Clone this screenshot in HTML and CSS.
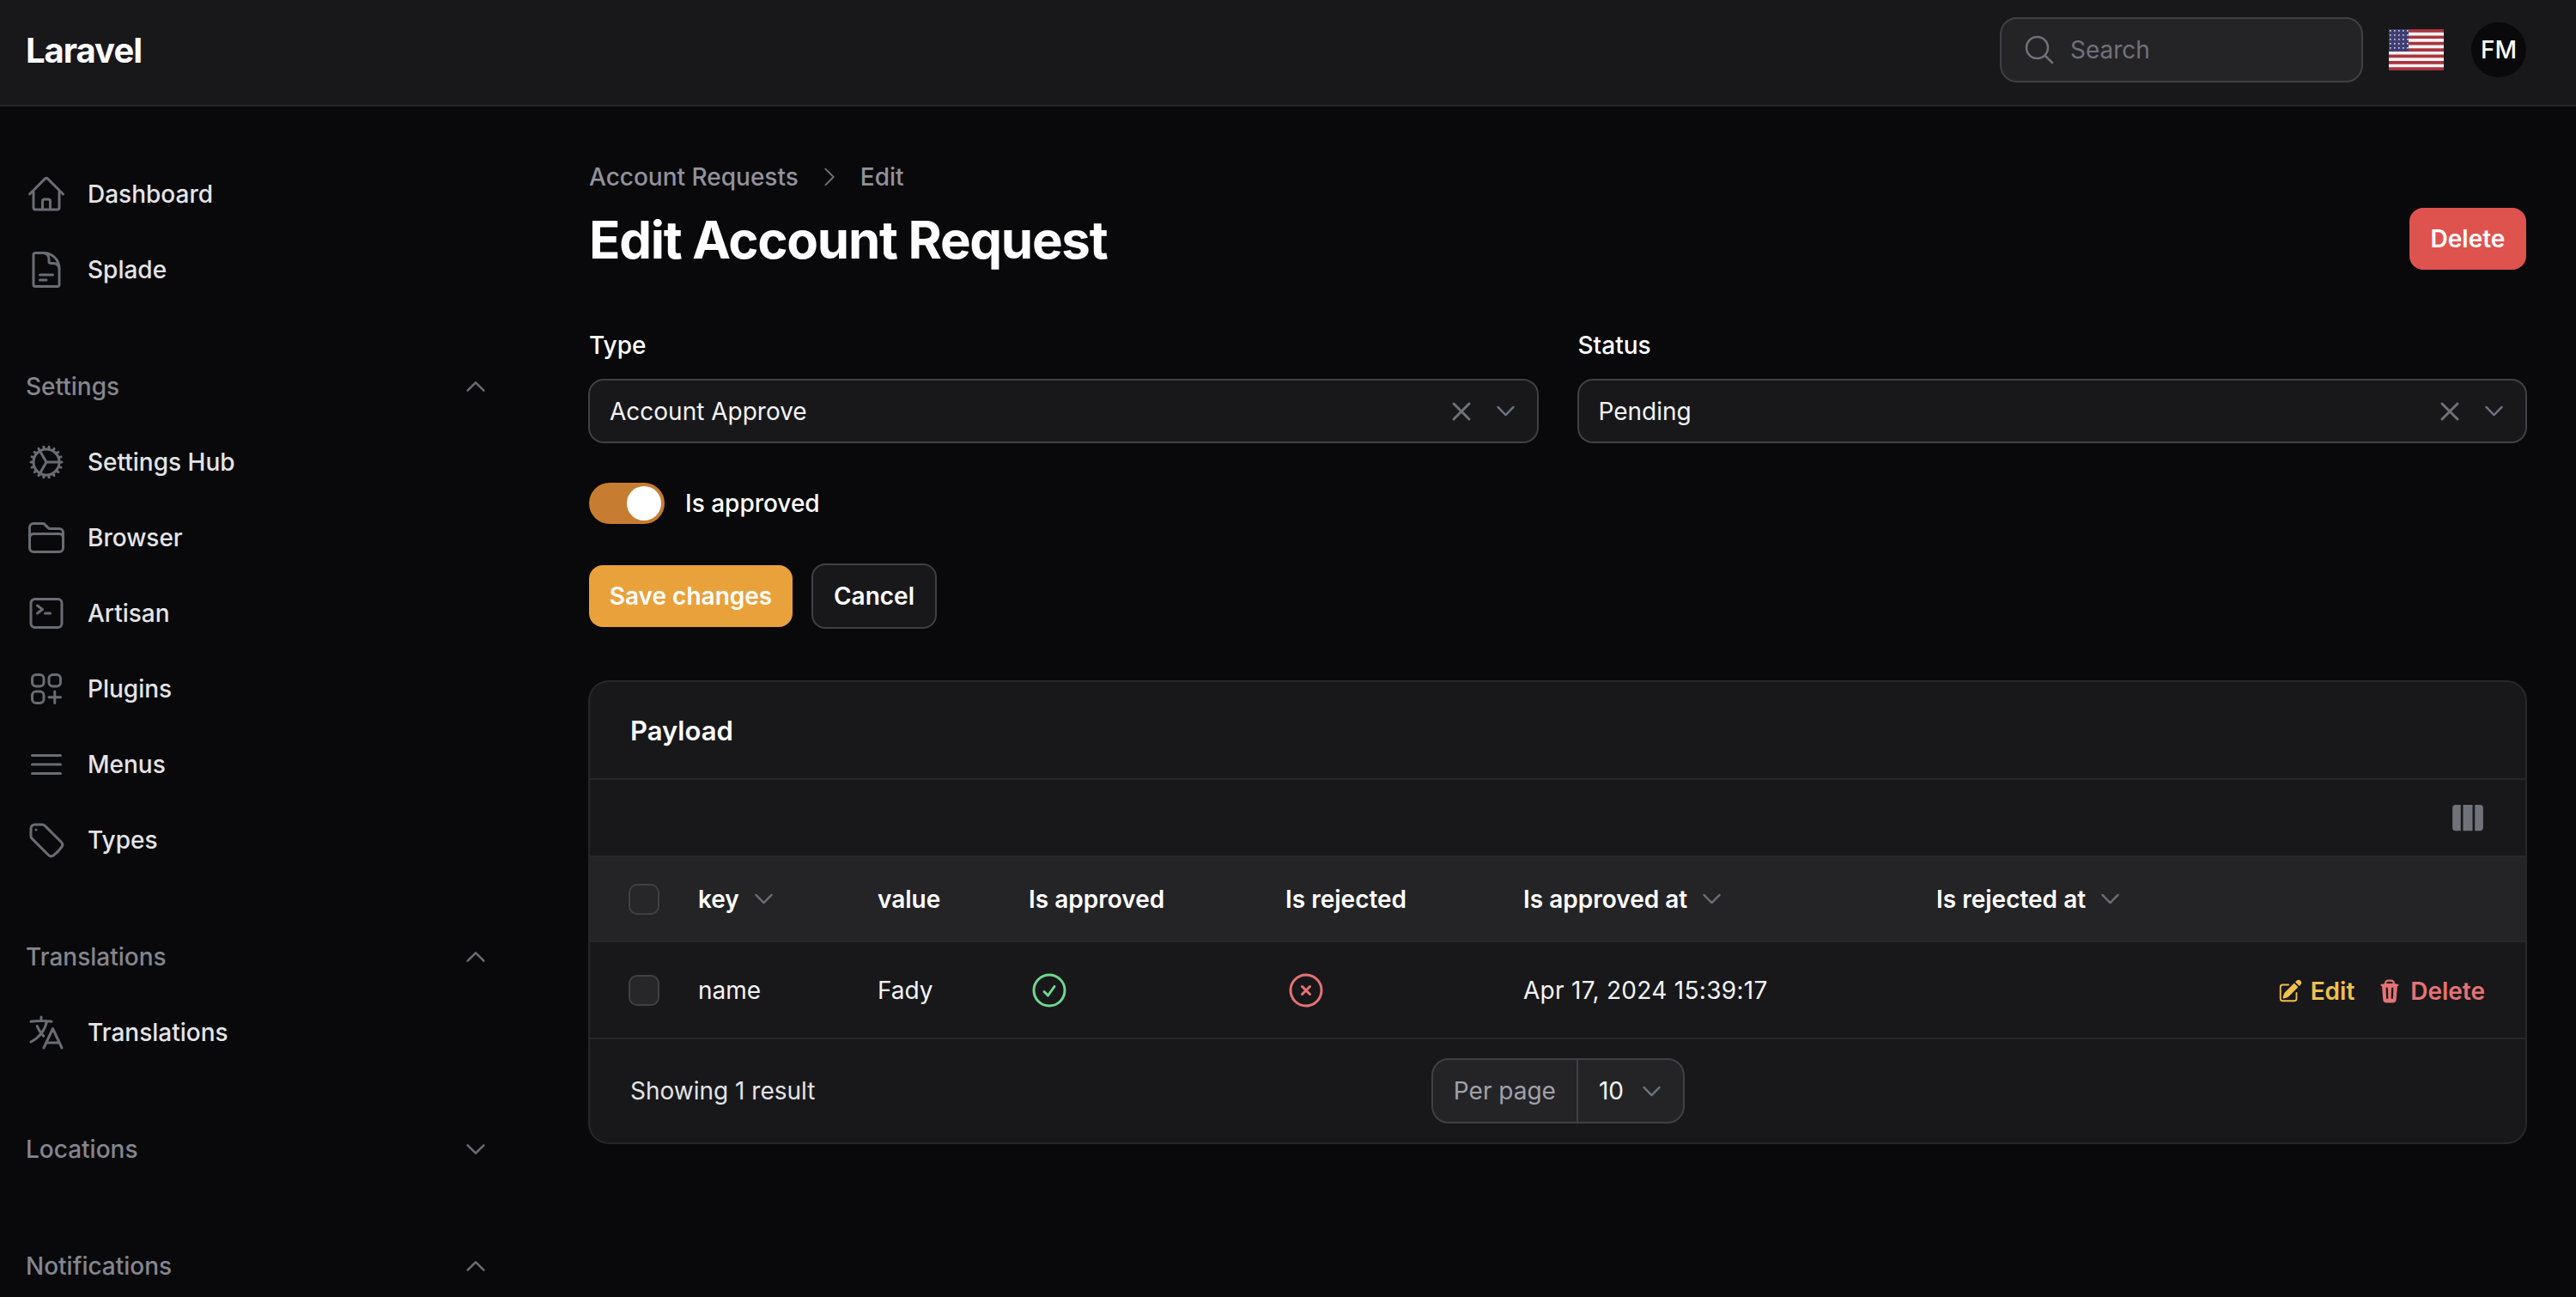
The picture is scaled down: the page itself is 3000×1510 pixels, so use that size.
FILE: index.html
```html
<!DOCTYPE html>
<html lang="en">
<head>
<meta charset="UTF-8">
<meta name="viewport" content="width=device-width, initial-scale=1.0">
<title>Edit Account Request</title>
<link rel="stylesheet" href="styles.css">
</head>
<body>
    <header class="topbar">
        <div class="logo">Laravel</div>
        <div class="search">
            <svg class="icon-search" viewBox="0 0 24 24"><path d="m21 21-5.197-5.197m0 0A7.5 7.5 0 1 0 5.196 5.196a7.5 7.5 0 0 0 10.607 10.607Z"/></svg>
            <span>Search</span>
        </div>
        <svg class="flag" viewBox="0 0 64 48">
            <defs>
                <pattern id="stars" width="5" height="5" patternUnits="userSpaceOnUse">
                    <rect x="1" y="1" width="1.6" height="1.6" fill="#d8d8e4"/>
                </pattern>
            </defs>
            <rect width="64" height="48" fill="#f4f4f4"/>
            <path fill="#a9343f" d="M0 0h64v3.7H0zM0 7.4h64v3.7H0zM0 14.8h64v3.7H0zM0 22.2h64v3.7H0zM0 29.6h64v3.7H0zM0 37h64v3.7H0zM0 44.3h64V48H0z"/>
            <rect width="23" height="26" fill="#3e3e74"/>
            <rect width="23" height="26" fill="url(#stars)"/>
        </svg>
        <div class="avatar">FM</div>
    </header>

    <div class="layout">
        <aside class="sidebar">
            <nav class="nav-group">
                <a class="nav-item"><svg class="icon" viewBox="0 0 24 24"><path d="m2.25 12 8.954-8.955c.44-.439 1.152-.439 1.591 0L21.75 12M4.5 9.75v10.125c0 .621.504 1.125 1.125 1.125H9.75v-4.875c0-.621.504-1.125 1.125-1.125h2.25c.621 0 1.125.504 1.125 1.125V21h4.125c.621 0 1.125-.504 1.125-1.125V9.75M8.25 21h8.25"/></svg>Dashboard</a>
                <a class="nav-item"><svg class="icon" viewBox="0 0 24 24"><path d="M19.5 14.25v-2.625a3.375 3.375 0 0 0-3.375-3.375h-1.5A1.125 1.125 0 0 1 13.5 7.125v-1.5a3.375 3.375 0 0 0-3.375-3.375H8.25m0 12.75h7.5m-7.5 3H12M10.5 2.25H5.625c-.621 0-1.125.504-1.125 1.125v17.25c0 .621.504 1.125 1.125 1.125h12.75c.621 0 1.125-.504 1.125-1.125V11.25a9 9 0 0 0-9-9Z"/></svg>Splade</a>
            </nav>
            <nav class="nav-group">
                <div class="nav-label">Settings<svg class="chevron" viewBox="0 0 24 24"><path d="m4.5 15.75 7.5-7.5 7.5 7.5"/></svg></div>
                <a class="nav-item"><svg class="icon" viewBox="0 0 24 24"><path d="M4.5 12a7.5 7.5 0 0 0 15 0m-15 0a7.5 7.5 0 1 1 15 0m-15 0H3m16.5 0H21m-1.5 0H12m-8.457 3.077 1.41-.513m14.095-5.13 1.41-.513M5.106 17.785l1.15-.964m11.49-9.642 1.149-.964M7.501 19.795l.75-1.3m7.5-12.99.75-1.3m-6.063 16.658.26-1.477m2.605-14.772.26-1.477m0 17.726-.26-1.477M10.698 4.614l-.26-1.477M16.5 19.794l-.75-1.299M7.5 4.205 12 12m6.894 5.785-1.149-.964M6.256 7.178l-1.15-.964m15.352 8.864-1.41-.513M4.954 9.435l-1.41-.514M12.002 12l-3.75 6.495"/></svg>Settings Hub</a>
                <a class="nav-item"><svg class="icon" viewBox="0 0 24 24"><path d="M2.25 12.75V12A2.25 2.25 0 0 1 4.5 9.75h15A2.25 2.25 0 0 1 21.75 12v.75m-8.69-6.44-2.12-2.12a1.5 1.5 0 0 0-1.061-.44H4.5A2.25 2.25 0 0 0 2.25 6v12a2.25 2.25 0 0 0 2.25 2.25h15A2.25 2.25 0 0 0 21.75 18V9a2.25 2.25 0 0 0-2.25-2.25h-5.379a1.5 1.5 0 0 1-1.06-.44Z"/></svg>Browser</a>
                <a class="nav-item"><svg class="icon" viewBox="0 0 24 24"><path d="m6.75 7.5 3 2.25-3 2.25m4.5 0h3m-9 8.25h13.5A2.25 2.25 0 0 0 21 18V6a2.25 2.25 0 0 0-2.25-2.25H5.25A2.25 2.25 0 0 0 3 6v12a2.25 2.25 0 0 0 2.25 2.25Z"/></svg>Artisan</a>
                <a class="nav-item"><svg class="icon" viewBox="0 0 24 24"><path d="M13.5 16.875h3.375m0 0h3.375m-3.375 0V13.5m0 6.75v-3.375M6 10.5h2.25a2.25 2.25 0 0 0 2.25-2.25V6a2.25 2.25 0 0 0-2.25-2.25H6A2.25 2.25 0 0 0 3.75 6v2.25A2.25 2.25 0 0 0 6 10.5Zm0 9.75h2.25A2.25 2.25 0 0 0 10.5 18v-2.25a2.25 2.25 0 0 0-2.25-2.25H6a2.25 2.25 0 0 0-2.25 2.25V18A2.25 2.25 0 0 0 6 20.25Zm9.75-9.75H18a2.25 2.25 0 0 0 2.25-2.25V6A2.25 2.25 0 0 0 18 3.75h-2.25A2.25 2.25 0 0 0 13.5 6v2.25a2.25 2.25 0 0 0 2.25 2.25Z"/></svg>Plugins</a>
                <a class="nav-item"><svg class="icon" viewBox="0 0 24 24"><path d="M3.75 6.75h16.5M3.75 12h16.5m-16.5 5.25h16.5"/></svg>Menus</a>
                <a class="nav-item"><svg class="icon" viewBox="0 0 24 24"><path d="M9.568 3H5.25A2.25 2.25 0 0 0 3 5.25v4.318c0 .597.237 1.17.659 1.591l9.581 9.581c.699.699 1.78.872 2.607.33a18.095 18.095 0 0 0 5.223-5.223c.542-.827.369-1.908-.33-2.607L11.16 3.66A2.25 2.25 0 0 0 9.568 3Z"/><path d="M6 6h.008v.008H6V6Z"/></svg>Types</a>
            </nav>
            <nav class="nav-group">
                <div class="nav-label">Translations<svg class="chevron" viewBox="0 0 24 24"><path d="m4.5 15.75 7.5-7.5 7.5 7.5"/></svg></div>
                <a class="nav-item"><svg class="icon" viewBox="0 0 24 24"><path d="m10.5 21 5.25-11.25L21 21m-9-3h7.5M3 5.621a48.474 48.474 0 0 1 6-.371m0 0c1.12 0 2.233.038 3.334.114M9 5.25V3m3.334 2.364C11.176 10.658 7.69 15.08 3 17.502m9.334-12.138c.896.061 1.785.147 2.666.257m-4.589 8.495a18.023 18.023 0 0 1-3.827-5.802"/></svg>Translations</a>
            </nav>
            <nav class="nav-group">
                <div class="nav-label">Locations<svg class="chevron" viewBox="0 0 24 24"><path d="m19.5 8.25-7.5 7.5-7.5-7.5"/></svg></div>
            </nav>
            <nav class="nav-group">
                <div class="nav-label">Notifications<svg class="chevron" viewBox="0 0 24 24"><path d="m4.5 15.75 7.5-7.5 7.5 7.5"/></svg></div>
            </nav>
        </aside>

        <main class="content">
            <div class="page-head">
                <div>
                    <div class="breadcrumb">
                        <span>Account Requests</span>
                        <svg class="crumb-sep" viewBox="0 0 24 24"><path d="m8.25 4.5 7.5 7.5-7.5 7.5"/></svg>
                        <span>Edit</span>
                    </div>
                    <h1>Edit Account Request</h1>
                </div>
                <button class="btn btn-danger">Delete</button>
            </div>

            <form class="edit-form">
                <div class="field-row">
                    <div class="field">
                        <label>Type</label>
                        <div class="select">
                            <span class="select-value">Account Approve</span>
                            <svg class="select-clear" viewBox="0 0 24 24"><path d="M6 18 18 6M6 6l12 12"/></svg>
                            <svg class="select-arrow" viewBox="0 0 24 24"><path d="m19.5 8.25-7.5 7.5-7.5-7.5"/></svg>
                        </div>
                    </div>
                    <div class="field">
                        <label>Status</label>
                        <div class="select">
                            <span class="select-value">Pending</span>
                            <svg class="select-clear" viewBox="0 0 24 24"><path d="M6 18 18 6M6 6l12 12"/></svg>
                            <svg class="select-arrow" viewBox="0 0 24 24"><path d="m19.5 8.25-7.5 7.5-7.5-7.5"/></svg>
                        </div>
                    </div>
                </div>
                <div class="toggle-row">
                    <span class="toggle"><span class="knob"></span></span>
                    <span>Is approved</span>
                </div>
                <div class="form-actions">
                    <button type="button" class="btn btn-primary">Save changes</button>
                    <button type="button" class="btn btn-cancel">Cancel</button>
                </div>
            </form>

            <section class="card">
                <div class="card-title">Payload</div>
                <div class="card-toolbar">
                    <svg class="icon-columns" viewBox="0 0 24 24"><path d="M15 3.75H9v16.5h6V3.75ZM16.5 20.25h3.375c1.035 0 1.875-.84 1.875-1.875V5.625c0-1.036-.84-1.875-1.875-1.875H16.5v16.5ZM4.125 3.75H7.5v16.5H4.125a1.875 1.875 0 0 1-1.875-1.875V5.625c0-1.036.84-1.875 1.875-1.875Z"/></svg>
                </div>
                <table class="data-table">
                    <colgroup>
                        <col class="col-check"><col class="col-key"><col class="col-value"><col class="col-approved"><col class="col-rejected"><col class="col-approved-at"><col class="col-rejected-at"><col>
                    </colgroup>
                    <thead>
                        <tr>
                            <th class="check-cell"><span class="checkbox"></span></th>
                            <th><span class="sort">key<svg viewBox="0 0 24 24"><path d="m19.5 8.25-7.5 7.5-7.5-7.5"/></svg></span></th>
                            <th>value</th>
                            <th>Is approved</th>
                            <th>Is rejected</th>
                            <th><span class="sort">Is approved at<svg viewBox="0 0 24 24"><path d="m19.5 8.25-7.5 7.5-7.5-7.5"/></svg></span></th>
                            <th><span class="sort">Is rejected at<svg viewBox="0 0 24 24"><path d="m19.5 8.25-7.5 7.5-7.5-7.5"/></svg></span></th>
                            <th></th>
                        </tr>
                    </thead>
                    <tbody>
                        <tr>
                            <td class="check-cell"><span class="checkbox"></span></td>
                            <td>name</td>
                            <td>Fady</td>
                            <td><svg class="bool bool-yes" viewBox="0 0 24 24"><path d="M9 12.75 11.25 15 15 9.75M21 12a9 9 0 1 1-18 0 9 9 0 0 1 18 0Z"/></svg></td>
                            <td><svg class="bool bool-no" viewBox="0 0 24 24"><path d="m9.75 9.75 4.5 4.5m0-4.5-4.5 4.5M21 12a9 9 0 1 1-18 0 9 9 0 0 1 18 0Z"/></svg></td>
                            <td class="cell-date">Apr 17, 2024 15:39:17</td>
                            <td></td>
                            <td class="row-actions">
                                <a class="action action-edit"><svg viewBox="0 0 24 24"><path d="M21.731 2.269a2.625 2.625 0 0 0-3.712 0l-1.157 1.157 3.712 3.712 1.157-1.157a2.625 2.625 0 0 0 0-3.712ZM19.513 8.199l-3.712-3.712-8.4 8.4a5.25 5.25 0 0 0-1.32 2.214l-.8 2.685a.75.75 0 0 0 .933.933l2.685-.8a5.25 5.25 0 0 0 2.214-1.32l8.4-8.4Z"/><path d="M5.25 5.25a3 3 0 0 0-3 3v10.5a3 3 0 0 0 3 3h10.5a3 3 0 0 0 3-3V13.5a.75.75 0 0 0-1.5 0v5.25a1.5 1.5 0 0 1-1.5 1.5H5.25a1.5 1.5 0 0 1-1.5-1.5V8.25a1.5 1.5 0 0 1 1.5-1.5h5.25a.75.75 0 0 0 0-1.5H5.25Z"/></svg>Edit</a>
                                <a class="action action-delete"><svg viewBox="0 0 20 20"><path fill-rule="evenodd" d="M8.75 1A2.75 2.75 0 0 0 6 3.75v.443c-.795.077-1.584.176-2.365.298a.75.75 0 1 0 .23 1.482l.149-.022.841 10.518A2.75 2.75 0 0 0 7.596 19h4.807a2.75 2.75 0 0 0 2.742-2.53l.841-10.52.149.023a.75.75 0 0 0 .23-1.482A41.03 41.03 0 0 0 14 4.193V3.75A2.75 2.75 0 0 0 11.25 1h-2.5ZM10 4c.84 0 1.673.025 2.5.075V3.75c0-.69-.56-1.25-1.25-1.25h-2.5c-.69 0-1.25.56-1.25 1.25v.325C8.327 4.025 9.16 4 10 4ZM8.58 7.72a.75.75 0 0 0-1.5.06l.3 7.5a.75.75 0 1 0 1.5-.06l-.3-7.5Zm4.34.06a.75.75 0 1 0-1.5-.06l-.3 7.5a.75.75 0 1 0 1.5.06l.3-7.5Z"/></svg>Delete</a>
                            </td>
                        </tr>
                    </tbody>
                </table>
                <div class="card-footer">
                    <span class="result-count">Showing 1 result</span>
                    <div class="per-page">
                        <span class="per-page-label">Per page</span>
                        <span class="per-page-value">10<svg viewBox="0 0 24 24"><path d="m19.5 8.25-7.5 7.5-7.5-7.5"/></svg></span>
                    </div>
                </div>
            </section>
        </main>
    </div>
</body>
</html>
```

FILE: styles.css
```css
* {
    box-sizing: border-box;
}

html, body {
    height: 100%;
}

body {
    margin: 0;
    background-color: #09090b;
    color: #fff;
    font-family: 'Inter', sans-serif;
    font-size: 28px;
    overflow: hidden;
}

svg {
    flex: none;
    fill: none;
    stroke: currentColor;
    stroke-width: 1.5;
    stroke-linecap: round;
    stroke-linejoin: round;
}

/* top bar */
.topbar {
    display: flex;
    align-items: center;
    height: 124px;
    padding: 0 58px 6px 30px;
    background-color: #18181b;
    border-bottom: 2px solid #27272a;
}

.logo {
    margin-right: auto;
    font-size: 40px;
    font-weight: 700;
    letter-spacing: -1px;
}

.search {
    display: flex;
    align-items: center;
    gap: 16px;
    width: 423px;
    height: 76px;
    padding-left: 24px;
    background-color: #242427;
    border: 2px solid #3f3f46;
    border-radius: 20px;
    color: #71717a;
}

.icon-search {
    width: 40px;
    height: 40px;
}

.flag {
    width: 64px;
    height: 48px;
    margin-left: 30px;
    stroke: none;
}

.avatar {
    display: flex;
    align-items: center;
    justify-content: center;
    width: 64px;
    height: 64px;
    margin-left: 32px;
    background-color: #09090b;
    border-radius: 50%;
    font-weight: 500;
}

.layout {
    display: flex;
    height: 1386px;
}

/* sidebar */
.sidebar {
    flex: none;
    width: 620px;
    height: 100%;
    padding: 58px 51px 0 0;
    overflow: hidden;
}

.nav-group {
    margin-bottom: 48px;
}

.nav-item {
    display: flex;
    align-items: center;
    gap: 24px;
    height: 88px;
    padding-left: 30px;
    color: #e4e4e7;
    font-weight: 500;
}

.nav-item .icon {
    width: 48px;
    height: 48px;
    color: #6b6b74;
}

.nav-label {
    display: flex;
    align-items: center;
    justify-content: space-between;
    height: 88px;
    padding-left: 30px;
    color: #85858e;
    font-weight: 500;
}

.chevron {
    width: 30px;
    height: 30px;
    color: #6b6b74;
    stroke-width: 2;
}

/* main content */
.content {
    flex: 1;
    min-width: 0;
    padding: 62px 57px 0 65px;
}

.page-head {
    display: flex;
    align-items: flex-end;
    justify-content: space-between;
    padding-right: 1px;
}

.breadcrumb {
    display: flex;
    align-items: center;
    gap: 21px;
    height: 40px;
    padding-left: 1px;
    color: #92929b;
    font-weight: 500;
}

.crumb-sep {
    width: 30px;
    height: 30px;
    color: #71717a;
}

h1 {
    margin: 18px 0 0;
    padding-left: 1px;
    font-size: 60px;
    line-height: 70px;
    font-weight: 700;
    letter-spacing: -1.3px;
}

.btn {
    display: inline-flex;
    align-items: center;
    justify-content: center;
    height: 72px;
    border: none;
    border-radius: 16px;
    color: #fff;
    font-family: inherit;
    font-size: 28px;
    font-weight: 600;
}

.btn-danger {
    width: 136px;
    background-color: #df534e;
}

.btn-primary {
    width: 237px;
    background-color: #e9a23b;
}

.btn-cancel {
    width: 146px;
    height: 76px;
    background-color: #18181b;
    border: 2px solid #3f3f46;
}

/* form */
.edit-form {
    margin-top: 68px;
}

.field-row {
    display: grid;
    grid-template-columns: 1fr 1fr;
    gap: 45px;
}

.field label {
    display: block;
    height: 40px;
    margin-bottom: 19px;
    padding-left: 1px;
    line-height: 40px;
    font-weight: 500;
}

.select {
    display: flex;
    align-items: center;
    height: 75px;
    padding: 0 22px 0 23px;
    background-color: #18181b;
    border: 2px solid #3f3f46;
    border-radius: 18px;
}

.select-value {
    flex: 1;
    color: #f4f4f5;
}

.select-clear {
    width: 36px;
    height: 36px;
    margin-right: 19px;
    color: #71717a;
    stroke-width: 2;
}

.select-arrow {
    width: 29px;
    height: 29px;
    color: #6b7280;
    stroke-width: 2;
}

.toggle-row {
    display: flex;
    align-items: center;
    gap: 24px;
    margin-top: 46px;
    padding-left: 1px;
    font-weight: 500;
}

.toggle {
    display: flex;
    align-items: center;
    justify-content: flex-end;
    width: 88px;
    height: 48px;
    padding-right: 4px;
    background-color: #c77d31;
    border-radius: 24px;
}

.knob {
    width: 40px;
    height: 40px;
    background-color: #fff;
    border-radius: 50%;
}

.form-actions {
    display: flex;
    align-items: center;
    gap: 22px;
    margin-top: 46px;
    padding-left: 1px;
}

/* payload card */
.card {
    margin-top: 60px;
    background-color: #18181b;
    border: 2px solid #27272a;
    border-radius: 24px;
    overflow: hidden;
}

.card-title {
    display: flex;
    align-items: center;
    height: 114px;
    padding-left: 47px;
    border-bottom: 2px solid #27272a;
    font-size: 31px;
    font-weight: 600;
}

.card-toolbar {
    display: flex;
    align-items: center;
    justify-content: flex-end;
    height: 90px;
    padding-right: 45px;
    border-bottom: 2px solid #27272a;
}

.icon-columns {
    width: 44px;
    height: 44px;
    fill: #71717a;
    stroke: none;
}

.data-table {
    width: 100%;
    border-collapse: collapse;
    table-layout: fixed;
}

.col-check { width: 126px; }
.col-key { width: 209px; }
.col-value { width: 176px; }
.col-approved { width: 299px; }
.col-rejected { width: 277px; }
.col-approved-at { width: 481px; }
.col-rejected-at { width: 300px; }

.data-table th {
    height: 98px;
    background-color: #242427;
    border-bottom: 2px solid #27272a;
    text-align: left;
    font-weight: 600;
}

.data-table td {
    height: 113px;
    border-bottom: 2px solid #27272a;
    font-weight: 400;
    color: #f4f4f5;
}

.data-table th, .data-table td {
    padding: 0;
    white-space: nowrap;
}

.data-table .check-cell {
    padding-left: 45px;
}

.data-table .cell-date {
    letter-spacing: .3px;
}

.checkbox {
    display: block;
    width: 36px;
    height: 36px;
    background-color: #27272a;
    border: 2px solid #3f3f46;
    border-radius: 10px;
}

.sort {
    display: inline-flex;
    align-items: center;
    gap: 14px;
}

.sort svg {
    width: 29px;
    height: 29px;
    color: #6b6b74;
    stroke-width: 2;
}

.bool {
    display: block;
    width: 48px;
    height: 48px;
}

.bool-yes {
    color: #6fd88f;
}

.bool-no {
    color: #e57373;
}

.data-table .row-actions {
    padding-right: 47px;
    text-align: right;
}

.action {
    display: inline-flex;
    align-items: center;
    gap: 9px;
    margin-left: 18px;
    vertical-align: middle;
    font-weight: 600;
}

.action svg {
    fill: currentColor;
    stroke: none;
    width: 30px;
    height: 30px;
}

.action-edit {
    color: #f0c04d;
}

.action-delete {
    color: #e57373;
}

.card-footer {
    display: flex;
    align-items: center;
    justify-content: space-between;
    height: 120px;
    padding-left: 47px;
    color: #e4e4e7;
}

.per-page {
    display: flex;
    align-items: center;
    height: 76px;
    margin-right: 979px;
    background-color: #242427;
    border: 2px solid #3f3f46;
    border-radius: 20px;
}

.per-page-label {
    display: flex;
    align-items: center;
    height: 100%;
    padding: 0 24px;
    border-right: 2px solid #3f3f46;
    color: #a1a1aa;
}

.per-page-value {
    display: flex;
    align-items: center;
    gap: 18px;
    padding: 0 22px 0 24px;
    color: #f4f4f5;
}

.per-page-value svg {
    width: 29px;
    height: 29px;
    color: #6b7280;
    stroke-width: 2;
}
```
